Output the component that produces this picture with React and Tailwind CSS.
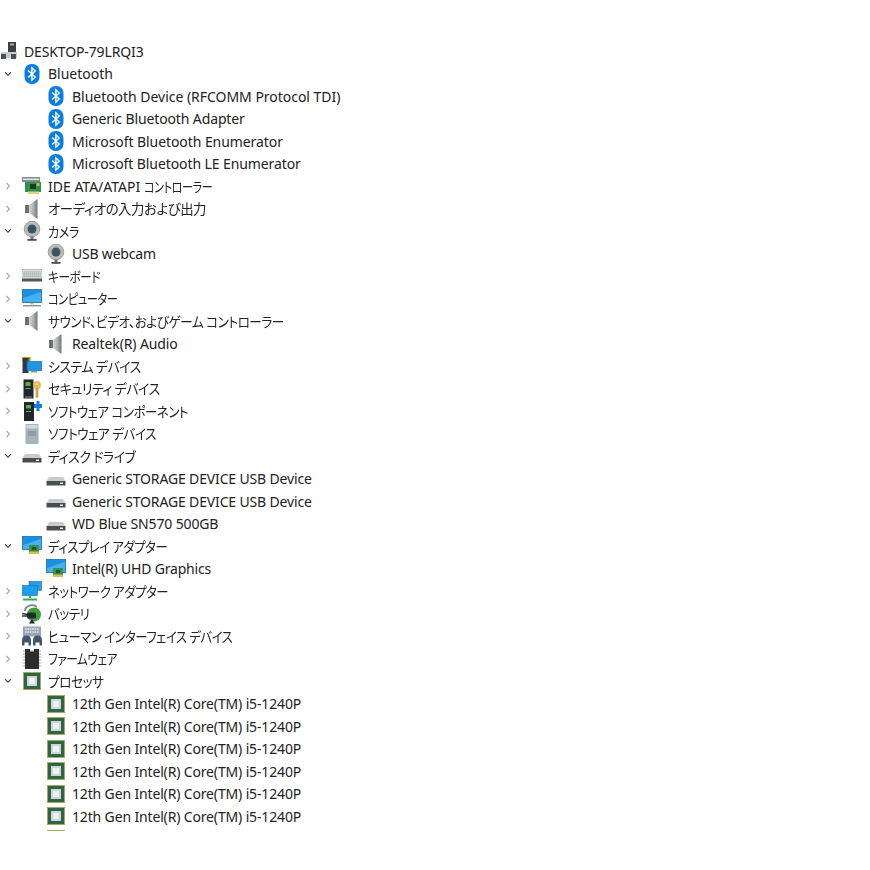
import React from "react";

const Svg = ({ children }) => (
  <svg width="20" height="20" viewBox="0 0 20 20" className="block blur-[0.3px]">{children}</svg>
);

const Bt = () => (
  <Svg>
    <rect x="2.500" y="0" width="15" height="20" rx="7" fill="#0a7fe0" />
    <path d="M6.200 6.600 13.200 13 9.900 16.200V3.800l3.300 3.200-7 6.400" fill="none" stroke="#fff" strokeWidth="1.400" />
  </Svg>
);
const Ide = () => (
  <Svg>
    <rect x="0" y="1" width="18" height="5" fill="#7f8c8e" />
    <rect x="1" y="2.500" width="16" height="1.500" fill="#dfe6e6" />
    <rect x="3" y="6" width="16" height="10" fill="#2f8f4b" />
    <rect x="8" y="8" width="6" height="5" fill="#173f22" />
    <rect x="14.500" y="7" width="3" height="3" fill="#c9b458" />
    <rect x="6" y="15.500" width="11" height="2.500" fill="#e2d27a" />
  </Svg>
);
const speakerGrad = (
  <defs>
    <linearGradient id="spk" x1="0" x2="1" y1="0" y2="0">
      <stop offset="0" stopColor="#d8dadb" />
      <stop offset="0.6" stopColor="#a4a8aa" />
      <stop offset="1" stopColor="#6f7375" />
    </linearGradient>
  </defs>
);
const Speaker = () => (
  <Svg>
    {speakerGrad}
    <path d="M3 6h4.500v8H3z" fill="#6d7173" />
    <path d="M7 6l8.500-6v20L7 14z" fill="url(#spk)" />
  </Svg>
);
const Cam = () => (
  <Svg>
    <circle cx="10" cy="8" r="7.800" fill="#b9bcbd" stroke="#8b8e90" strokeWidth="0.8" />
    <circle cx="10" cy="8" r="4.500" fill="#4b5155" />
    <circle cx="10" cy="8" r="2.500" fill="#1d5f70" />
    <rect x="8.500" y="15.500" width="3" height="2.500" fill="#6f6f6f" />
    <rect x="5.500" y="18" width="9" height="1.800" fill="#4d4d4d" />
  </Svg>
);
const Keyboard = () => (
  <Svg>
    <rect x="0" y="3.500" width="20" height="11" fill="#dcdfe1" stroke="#9a9fa2" strokeWidth="0.6" />
    <path d="M1.500 6h17M1.500 8.200h17M1.500 10.400h17" stroke="#8f979c" strokeWidth="1.200" strokeDasharray="1.300 0.700" />
    <rect x="0" y="12.500" width="20" height="3" fill="#54595d" />
  </Svg>
);
const Monitor = () => (
  <Svg>
    <rect x="0.500" y="0.500" width="19" height="13" fill="#1d8fe0" stroke="#1c6da8" strokeWidth="0.8" />
    <path d="M1 9l18-6v10H1z" fill="#45b0f2" />
    <rect x="8" y="14" width="4" height="1.500" fill="#c3c8cb" />
    <rect x="1" y="16" width="18" height="1.500" fill="#8e979d" />
  </Svg>
);
const SysDev = () => (
  <Svg>
    <rect x="0.500" y="1" width="8" height="4" fill="#b58f2e" />
    <rect x="0.500" y="2" width="6" height="15" fill="#2f3b3f" />
    <rect x="5" y="5.500" width="14.500" height="9" fill="#1f96e0" stroke="#1b6fa9" strokeWidth="0.7" />
    <rect x="9" y="15" width="6" height="1.500" fill="#8e979d" />
  </Svg>
);
const Security = () => (
  <Svg>
    <rect x="1.500" y="0.500" width="10" height="19" fill="#20282a" />
    <rect x="3.500" y="3" width="5" height="4" fill="#5aae4a" />
    <rect x="3.500" y="9" width="5" height="1" fill="#8a9294" />
    <rect x="3" y="17.500" width="7" height="1" fill="#8a9294" />
    <circle cx="15" cy="6" r="4" fill="#e8bc55" />
    <circle cx="15" cy="5" r="1" fill="#fff2c8" />
    <path d="M13.600 9h2.800v8.500l-1.400 2-1.400-2z" fill="#d0a445" />
  </Svg>
);
const SoftComp = () => (
  <Svg>
    <rect x="2" y="1" width="10" height="19" fill="#20282a" />
    <rect x="4" y="4" width="5" height="3.500" fill="#5aae4a" />
    <rect x="4" y="10" width="5" height="1" fill="#8a9294" />
    <path d="M12 3h2.500V0h3v3H20v4h-2.500v3h-3V7H12z" fill="#1680dc" />
  </Svg>
);
const SoftDev = () => (
  <Svg>
    <rect x="3.500" y="0" width="13" height="20" rx="1" fill="#a3b3bb" />
    <rect x="4.500" y="1" width="11" height="3.500" fill="#d2dadd" />
    <rect x="6" y="7" width="8" height="5" fill="#8b9fa9" />
  </Svg>
);
const Disk = () => (
  <Svg>
    <path d="M3 8h14l2.500 4H.5z" fill="#c9cccd" />
    <rect x="0.500" y="12" width="19" height="4.500" fill="#4a4e50" />
    <rect x="14" y="13.500" width="3" height="1.500" fill="#e4e6e7" />
  </Svg>
);
const Display = () => (
  <Svg>
    <rect x="0.500" y="0.500" width="19" height="13" fill="#1d8fe0" stroke="#1c6da8" strokeWidth="0.8" />
    <path d="M1 9l18-6v10H1z" fill="#45b0f2" />
    <rect x="7" y="9" width="10" height="7" fill="#3a8f4b" />
    <rect x="10" y="11" width="4" height="3" fill="#1f4f2c" />
    <rect x="7" y="15.500" width="10" height="2.500" fill="#d6bd45" />
  </Svg>
);
const Network = () => (
  <Svg>
    <rect x="7" y="0.500" width="12.500" height="9" fill="#2a9ce0" stroke="#1c6da8" strokeWidth="0.6" />
    <rect x="0.500" y="4.500" width="15" height="10" fill="#19a0e8" stroke="#1c6da8" strokeWidth="0.6" />
    <path d="M8 14.500v2.500M1 18.500h14" stroke="#2fae5a" strokeWidth="2" />
  </Svg>
);
const Battery = () => (
  <Svg>
    <path d="M3 7a7 6 0 0 1 12-4" fill="none" stroke="#7d8588" strokeWidth="1.800" />
    <circle cx="12" cy="10.500" r="7" fill="#3f9e3c" />
    <rect x="5" y="8.500" width="9" height="6" rx="1.500" fill="#25292b" />
    <path d="M0 12h5M0 9.500l5 1" stroke="#333" strokeWidth="1.300" />
    <path d="M10 15l-3 4.500h6z" fill="#25292b" />
  </Svg>
);
const Hid = () => (
  <Svg>
    <rect x="1" y="0.500" width="18" height="10" fill="#9aa6b6" />
    <path d="M3 3h14M3 6h14" stroke="#e8ecf1" strokeWidth="1.400" strokeDasharray="1.600 0.800" />
    <path d="M0 19.500v-5q0-5 4.500-5t4.500 5v5H6.500v-3h-4v3z" fill="#44566e" />
    <path d="M11 19.500v-5q0-5 4.500-5t4.500 5v5h-2.500v-3h-4v3z" fill="#44566e" />
  </Svg>
);
const Firmware = () => (
  <Svg>
    <path d="M1 2h18M1 5h18M1 8h18M1 11h18M1 14h18M1 17h18" stroke="#a8a8a0" strokeWidth="1" />
    <path d="M3 0h5v2.500h4V0h5v20H3z" fill="#2b2d2f" />
  </Svg>
);
const Cpu = () => (
  <Svg>
    <rect x="1" y="1" width="18" height="18" fill="#a3ab62" />
    <rect x="2" y="2" width="16" height="16" fill="#2f6445" />
    <rect x="5" y="5" width="10" height="10" fill="#cdd5d5" />
    <rect x="7" y="7" width="6" height="6" fill="#eef0f1" />
  </Svg>
);
const Host = () => (
  <svg width="18" height="20" viewBox="0 0 18 20" className="block blur-[0.3px]">
    <rect x="8" y="1" width="8" height="10" fill="#3a3f42" />
    <rect x="10" y="2.500" width="4" height="2" fill="#a5abae" />
    <rect x="1" y="11" width="16" height="6" fill="#c9cdcf" />
    <rect x="1" y="13" width="5" height="5" fill="#4a4f52" />
    <rect x="11" y="13" width="5" height="5" fill="#4a4f52" />
  </svg>
);

const cpuName = "12th Gen Intel(R) Core(TM) i5-1240P";
const T = "tracking-[-0.15px]";

const rows = [
  { d: 1, s: "open", I: Bt, t: "Bluetooth" },
  { d: 2, I: Bt, t: "Bluetooth Device (RFCOMM Protocol TDI)", c: "tracking-[-0.03px]" },
  { d: 2, I: Bt, t: "Generic Bluetooth Adapter", c: "tracking-[-0.12px]" },
  { d: 2, I: Bt, t: "Microsoft Bluetooth Enumerator", c: "tracking-[-0.07px]" },
  { d: 2, I: Bt, t: "Microsoft Bluetooth LE Enumerator", c: "tracking-[-0.09px]" },
  { d: 1, s: "closed", I: Ide, t: "IDE ATA/ATAPI ", j: "コントローラー", x: "scale-x-[0.79]" },
  { d: 1, s: "closed", I: Speaker, j: "オーディオの入力および出力", x: "scale-x-[0.96]" },
  { d: 1, s: "open", I: Cam, j: "カメラ", x: "scale-x-[0.86]" },
  { d: 2, I: Cam, t: "USB webcam", c: "tracking-[-0.2px]" },
  { d: 1, s: "closed", I: Keyboard, j: "キーボード", x: "scale-x-[0.83]" },
  { d: 1, s: "closed", I: Monitor, j: "コンピューター", x: "scale-x-[0.8]" },
  { d: 1, s: "open", I: Speaker, j: "サウンド、ビデオ、およびゲーム コントローラー", x: "scale-x-[0.9]" },
  { d: 2, I: Speaker, t: "Realtek(R) Audio", c: "tracking-[-0.12px]" },
  { d: 1, s: "closed", I: SysDev, j: "システム デバイス", x: "scale-x-[0.92]" },
  { d: 1, s: "closed", I: Security, j: "セキュリティ デバイス", x: "scale-x-[0.92]" },
  { d: 1, s: "closed", I: SoftComp, j: "ソフトウェア コンポーネント", x: "scale-x-[0.89]" },
  { d: 1, s: "closed", I: SoftDev, j: "ソフトウェア デバイス", x: "scale-x-[0.9]" },
  { d: 1, s: "open", I: Disk, j: "ディスク ドライブ", x: "scale-x-[0.92]" },
  { d: 2, I: Disk, t: "Generic STORAGE DEVICE USB Device", c: T },
  { d: 2, I: Disk, t: "Generic STORAGE DEVICE USB Device", c: T },
  { d: 2, I: Disk, t: "WD Blue SN570 500GB", c: T },
  { d: 1, s: "open", I: Display, j: "ディスプレイ アダプター", x: "scale-x-[0.88]" },
  { d: 2, I: Display, t: "Intel(R) UHD Graphics", c: "tracking-[-0.19px]" },
  { d: 1, s: "closed", I: Network, j: "ネットワーク アダプター", x: "scale-x-[0.88]" },
  { d: 1, s: "closed", I: Battery, j: "バッテリ", x: "scale-x-[0.89]" },
  { d: 1, s: "closed", I: Hid, j: "ヒューマン インターフェイス デバイス", x: "scale-x-[0.88]" },
  { d: 1, s: "closed", I: Firmware, j: "ファームウェア", x: "scale-x-[0.83]" },
  { d: 1, s: "open", I: Cpu, j: "プロセッサ", x: "scale-x-[0.9]" },
  { d: 2, I: Cpu, t: cpuName, c: T },
  { d: 2, I: Cpu, t: cpuName, c: T },
  { d: 2, I: Cpu, t: cpuName, c: T },
  { d: 2, I: Cpu, t: cpuName, c: T },
  { d: 2, I: Cpu, t: cpuName, c: T },
  { d: 2, I: Cpu, t: cpuName, c: T },
  { d: 2, I: Cpu },
];

const Chevron = ({ state }) => {
  if (state === "open")
    return (
      <svg width="8" height="6" viewBox="0 0 8 6" className="block">
        <path d="M1 1.200 4 4.200 7 1.200" fill="none" stroke="#444" strokeWidth="1.200" />
      </svg>
    );
  if (state === "closed")
    return (
      <svg width="6" height="8" viewBox="0 0 6 8" className="block">
        <path d="M1.500 1 4.500 4 1.500 7" fill="none" stroke="#a6a6a6" strokeWidth="1.100" />
      </svg>
    );
  return null;
};

const Row = ({ r }) => {
  const Icon = r.I;
  return (
    <div className="flex h-[22.5px] items-center whitespace-pre">
      {r.d === 2 && <div className="w-[24px] shrink-0" />}
      <div className="flex w-[16px] shrink-0 items-center justify-center">
        <Chevron state={r.s} />
      </div>
      <div className="ml-[6px] w-[20px] shrink-0">
        <Icon />
      </div>
      <span className={`ml-[6px] pt-[1px] ${r.c || ""}`}>
        {r.t}
        {r.j && (
          <span className={`inline-block origin-left tracking-[-0.5px] [font-feature-settings:'palt'] ${r.x}`}>{r.j}</span>
        )}
      </span>
    </div>
  );
};

export default function App() {
  return (
    <div className="h-[870px] w-[870px] overflow-hidden bg-white pt-[40px] text-[14px] leading-none text-[#222222] [font-family:'Noto_Sans','Noto_Sans_CJK_JP',sans-serif]">
      <div className="h-[791px] overflow-hidden">
        <div className="flex h-[22.5px] items-center whitespace-nowrap">
          <Host />
          <span className="ml-[6px] pt-[1px] tracking-[-0.13px]">DESKTOP-79LRQI3</span>
        </div>
        {rows.map((r, i) => (
          <Row key={i} r={r} />
        ))}
      </div>
    </div>
  );
}
